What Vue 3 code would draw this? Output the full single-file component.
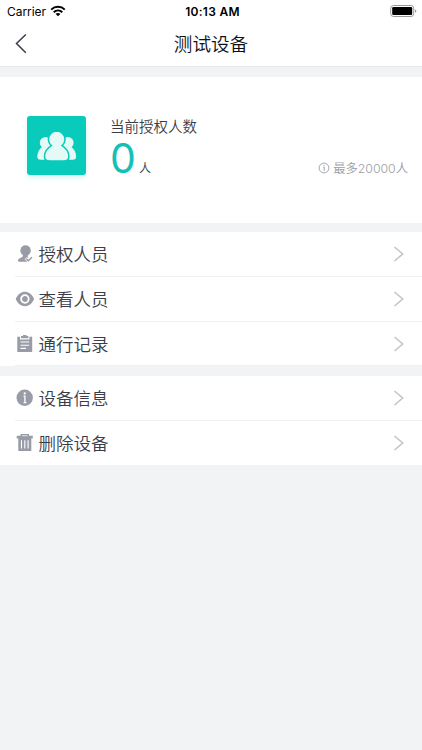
<script setup>
const groups = [
  [
    { icon: 'authorize', label: '授权人员' },
    { icon: 'view', label: '查看人员' },
    { icon: 'record', label: '通行记录' },
  ],
  [
    { icon: 'info', label: '设备信息' },
    { icon: 'delete', label: '删除设备' },
  ],
]
</script>

<template>
  <div class="screen">
    <header class="top">
      <div class="status">
        <div class="carrier">
          <span>Carrier</span>
          <svg class="wifi" width="16" height="12" viewBox="0 0 16 12">
            <g fill="none" stroke="#000" stroke-width="2">
              <path d="M1.2 4.6C5 .9 11 .9 14.8 4.6" />
              <path d="M3.700 7.200C6.200 4.900 9.800 4.900 12.300 7.200" />
            </g>
            <path d="M5.600 8.900C7 7.700 9 7.700 10.400 8.900L8 11.300Z" />
          </svg>
        </div>
        <span class="time">10:13 AM</span>
        <svg class="battery" width="28" height="13" viewBox="0 0 28 13">
          <rect x="0.700" y="0.500" width="23" height="11" rx="2.800" fill="#fff" stroke="#999" stroke-width="1" />
          <rect x="2.200" y="2.100" width="20" height="7.800" rx="1.200" />
          <path d="M25 4.200Q27.800 6 25 7.800Z" fill="#999" />
        </svg>
      </div>
      <nav class="nav">
        <svg class="back" width="14" height="22" viewBox="0 0 14 22">
          <path d="M11.800 1.500L2.500 10.500L11.800 19.700" fill="none" stroke="#3b3e49" stroke-width="1.500" />
        </svg>
        <h1>测试设备</h1>
        <span></span>
      </nav>
    </header>

    <section class="summary">
      <div class="tile">
        <svg width="40" height="30" viewBox="0 0 40 30" fill="#e5faf7">
          <circle cx="8.500" cy="10.800" r="5.700" />
          <circle cx="30.900" cy="10.800" r="5.700" />
          <path d="M5.500 14.500C2.500 16.800 .3 20.500 .3 24.500Q.4 27.700 3.500 27.700H14V14.500Z" />
          <path d="M33.900 14.500C36.900 16.800 39.100 20.500 39.100 24.500Q39 27.700 35.900 27.700H25V14.500Z" />
          <path d="M14.300 13.600C10.500 16 7.500 20.200 7.500 24.500Q7.600 29 12.500 29H26.900Q31.800 29 31.900 24.500C31.900 20.200 28.900 16 25.100 13.600A8.300 8.300 0 1 0 14.300 13.600Z" stroke="#09cbbb" stroke-width="1.600" />
        </svg>
      </div>
      <div class="count">
        <div class="caption">当前授权人数</div>
        <div class="figure"><span class="zero">0</span><span class="unit">人</span></div>
      </div>
      <div class="limit">
        <svg width="12" height="12" viewBox="0 0 12 12">
          <circle cx="6" cy="6" r="4.900" fill="none" stroke="#9b9da7" stroke-width=".9" />
          <path d="M5.200 5.200H6.200V8.700M5.500 3.400H6.500" fill="none" stroke="#9b9da7" stroke-width="1" />
        </svg>
        <span>最多20000人</span>
      </div>
    </section>

    <ul v-for="(group, i) in groups" :key="i" class="group">
      <li v-for="item in group" :key="item.label" class="row">
        <svg class="icon" width="20" height="20" viewBox="0 0 20 20" fill="#999ca6">
          <template v-if="item.icon === 'authorize'">
            <path d="M10.500 1.300A5.300 5.300 0 0 1 13.700 10.800Q12.300 11.500 12.900 12.700L13.700 13.700L11.600 13.200L9.700 15.200L12.500 17.700H4.300Q2.400 17.700 3.200 15.700C4 14 7.500 13.600 8 12Q8.200 11.200 7.300 10.700A5.300 5.300 0 0 1 10.500 1.300Z" />
            <path d="M11.200 14.600L13.400 16.700L17 13.200" fill="none" stroke="#999ca6" stroke-width="1.500" />
          </template>
          <template v-else-if="item.icon === 'view'">
            <path d="M.7 10C5 .4 14.800 .4 19.100 10C14.800 19.600 5 19.600 .7 10Z" />
            <circle cx="9.900" cy="10" r="3.800" fill="none" stroke="#fff" stroke-width="1.800" />
          </template>
          <template v-else-if="item.icon === 'record'">
            <path d="M2.300 2.800H5V5.400H14.400V2.800H17.200V18H2.300Z" />
            <path d="M6 2H8V.9H11.500V2H13.400V4.200H6Z" />
            <path d="M5.500 8H14.200M5.500 11.200H14.200M5.500 14.400H11" stroke="#fff" stroke-width="1.100" />
          </template>
          <template v-else-if="item.icon === 'info'">
            <circle cx="9.700" cy="9.800" r="8.200" />
            <circle cx="9.700" cy="5.400" r="1.100" fill="#fff" />
            <path d="M8.500 8.200H9.900V14.700M8.500 14.700H11.300" fill="none" stroke="#fff" stroke-width="1.300" />
          </template>
          <template v-else>
            <path d="M1.700 2.700H5.500V1H14V2.700H17.800V5.400H1.700ZM3.300 5.400H16.300V18H3.300Z" />
            <path d="M7 2.700H12.500" stroke="#fff" stroke-width=".7" />
            <path d="M6.500 7.200V15.500M9.800 7.200V15.500M13.100 7.200V15.500" stroke="#fff" stroke-width="1.100" />
          </template>
        </svg>
        <span class="label">{{ item.label }}</span>
        <svg class="chevron" width="12" height="16" viewBox="0 0 12 16">
          <path d="M1.500 1L9.700 8L1.500 15" fill="none" stroke="#c4c4ca" stroke-width="1.600" />
        </svg>
      </li>
    </ul>
  </div>
</template>

<style>
body {
  background: #f2f3f5;
}
</style>

<style scoped>
.screen {
  height: 750px;
  overflow: hidden;
  background: #f2f3f5;
  color: #3b3e49;
  font-family: Inter, "Noto Sans CJK SC", sans-serif;
  font-weight: 350;
}
.top {
  box-sizing: border-box;
  height: 67px;
  background: #fff;
  border-bottom: 1px solid #e8e9eb;
}
.status {
  display: grid;
  grid-template-columns: 1fr auto 1fr;
  align-items: center;
  height: 22px;
  padding: 0 4px 0 7px;
  color: #000;
  font-size: 12px;
  font-weight: 400;
}
.carrier {
  display: flex;
  align-items: center;
  gap: 4px;
  letter-spacing: -0.050px;
}
.time {
  font-weight: 600;
  letter-spacing: 0.300px;
}
.battery {
  justify-self: end;
}
.nav {
  display: grid;
  grid-template-columns: 1fr auto 1fr;
  align-items: center;
  height: 43px;
  padding: 0 14px;
}
h1 {
  margin: 1px 0 0;
  color: #101012;
  font-size: 18.600px;
  font-weight: 350;
  line-height: 28px;
}
.summary {
  box-sizing: border-box;
  display: flex;
  height: 146px;
  margin-top: 10px;
  padding: 39px 14px 0 27px;
  background: #fff;
}
.tile {
  display: flex;
  align-items: center;
  justify-content: center;
  width: 59px;
  height: 59px;
  border-radius: 3px;
  background: #09cbbb;
  box-shadow: 0 3px 5px #d9f7f4;
}
.tile svg {
  margin-top: 2px;
}
.count {
  flex: 1;
  margin-left: 24px;
}
.caption {
  font-size: 14.500px;
  line-height: 21px;
}
.figure {
  display: flex;
  align-items: baseline;
  gap: 4px;
  line-height: 42px;
}
.zero {
  color: #14c0b6;
  font-size: 41px;
  font-weight: 400;
  letter-spacing: -1px;
}
.unit {
  font-size: 12px;
}
.limit {
  display: flex;
  align-items: center;
  align-self: flex-start;
  gap: 3px;
  height: 20px;
  margin-top: 42px;
  color: #9b9da7;
  font-size: 12.300px;
}
.group {
  margin: 9px 0 0;
  padding: 0;
  list-style: none;
  background: #fff;
}
.group:last-child {
  margin-top: 9.600px;
}
.row {
  display: flex;
  align-items: center;
  height: 44.800px;
  padding: 0 17px 0 15px;
  background: linear-gradient(#f0f0f2, #f0f0f2) 15px 100% / 100% 1px no-repeat;
}
.group:last-child .row:last-child {
  height: 44.400px;
  background: none;
}
.label {
  flex: 1;
  margin: 2px 0 0 3.500px;
  font-size: 17.500px;
  line-height: 26px;
}
</style>
